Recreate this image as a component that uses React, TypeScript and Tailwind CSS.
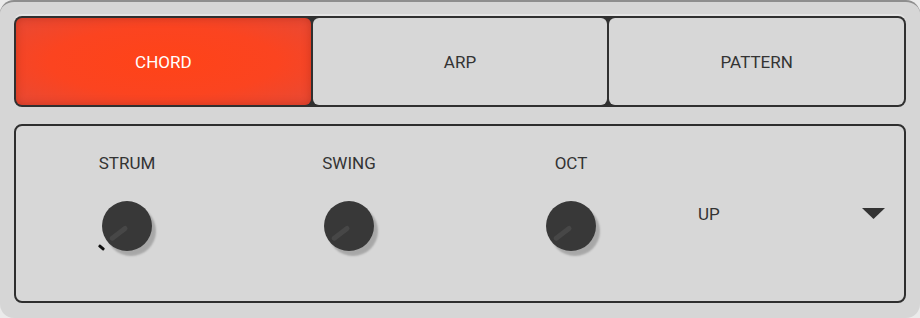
import React from "react";

function Knob({ tick }: { tick?: boolean }) {
  return (
    <div className="relative w-[50px] h-[50px]">
      <div className="absolute inset-0 rounded-full bg-[#383838] shadow-[4px_5px_2px_rgba(0,0,0,0.22)]">
        <div className="absolute left-1/2 top-[52%] w-[21px] h-[5px] -translate-y-1/2 origin-left rotate-[143deg] rounded-full bg-[#474747]" />
      </div>
      {tick && (
        <div className="absolute left-[-2px] top-[43px] w-[3px] h-[7px] -rotate-[50deg] rounded-[1px] bg-[#111]" />
      )}
    </div>
  );
}

export default function App() {
  const tabs = ["CHORD", "ARP", "PATTERN"];
  const knobs = ["STRUM", "SWING", "OCT"];

  return (
    <div
      className="w-[920px] h-[318px] bg-[#ebebeb] overflow-hidden"
      style={{ fontFamily: "Roboto, 'Liberation Sans', sans-serif" }}
    >
      <div className="h-[318px] rounded-[14px] bg-[#d6d6d6] border-t-2 border-[#8e8e8e] pt-[14px] px-[14px]">
        {/* Mode tabs */}
        <div className="flex gap-[2px] p-[2px] h-[91px] rounded-[8px] bg-[#303030] shadow-[0_-2px_0_rgba(255,255,255,0.35)]">
          {tabs.map((t, i) => (
            <div
              key={t}
              className={`flex-1 flex items-center justify-center pt-[2px] rounded-[6px] text-[17px] ${
                i === 0
                  ? "text-white bg-[radial-gradient(ellipse_at_center,#ff4318_0%,#fb4420_55%,#e64a36_100%)] shadow-[inset_0_0_8px_rgba(160,30,10,0.45)]"
                  : "text-[#333] bg-[#d7d7d7]"
              }`}
            >
              {t}
            </div>
          ))}
        </div>

        {/* Controls panel */}
        <div className="mt-[17px] h-[179px] rounded-[8px] border-2 border-[#2e2e2e] bg-[#d7d7d7] grid grid-cols-[222px_222px_222px_1fr] pt-[28px]">
          {knobs.map((k, i) => (
            <div key={k} className="flex flex-col items-center">
              <span className="text-[17px] leading-[18px] text-[#333]">{k}</span>
              <div className="mt-[29px]">
                <Knob tick={i === 0} />
              </div>
            </div>
          ))}
          <div className="flex items-start justify-between pl-[16px] pr-[19px] pt-[51px]">
            <span className="text-[17px] leading-[18px] text-[#333]">UP</span>
            <svg width="23" height="11" viewBox="0 0 23 11" className="mt-[3px]">
              <polygon points="0,0 23,0 11.5,11" fill="#333" />
            </svg>
          </div>
        </div>
      </div>
    </div>
  );
}
